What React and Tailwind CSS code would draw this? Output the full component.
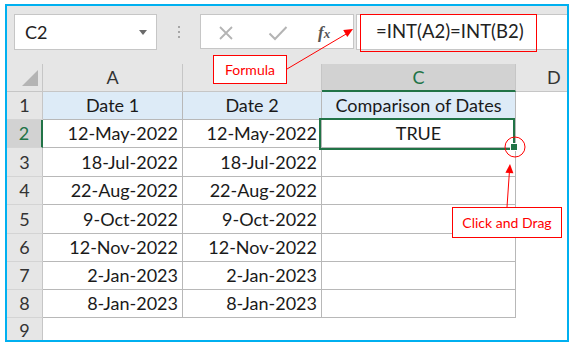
import React from 'react';

const rows = [
    { n: 1, a: 'Date 1', b: 'Date 2', c: 'Comparison of Dates', h: 28, head: true },
    { n: 2, a: '12-May-2022', b: '12-May-2022', c: 'TRUE', h: 28 },
    { n: 3, a: '18-Jul-2022', b: '18-Jul-2022', c: '', h: 29 },
    { n: 4, a: '22-Aug-2022', b: '22-Aug-2022', c: '', h: 28 },
    { n: 5, a: '9-Oct-2022', b: '9-Oct-2022', c: '', h: 29 },
    { n: 6, a: '12-Nov-2022', b: '12-Nov-2022', c: '', h: 28 },
    { n: 7, a: '2-Jan-2023', b: '2-Jan-2023', c: '', h: 28 },
    { n: 8, a: '8-Jan-2023', b: '8-Jan-2023', c: '', h: 28 },
];

const font = 'font-[Lato,sans-serif]';

function RowHeader({ n, active, h }) {
    return (
        <div
            style={{ height: h }}
            className={`w-[36px] shrink-0 flex items-center justify-center border-b border-[#d4d4d4] ${
                active
                    ? 'bg-[#d2d2d2] text-[#217346] border-r-2 border-r-[#217346]'
                    : 'bg-[#e6e6e6] text-[#333] border-r border-r-[#c6c6c6]'
            }`}
        >
            {n}
        </div>
    );
}

function DataRow({ row }) {
    const cell = row.head ? 'bg-[#ddebf7] justify-center' : 'bg-white justify-end pr-[4px]';
    return (
        <div className="flex" style={{ height: row.h }}>
            <RowHeader n={row.n} active={row.n === 2} h={row.h} />
            <div className={`w-[140px] shrink-0 flex items-center border-r border-b border-[#b8b8b8] ${cell}`}>{row.a}</div>
            <div className={`w-[139px] shrink-0 flex items-center border-r border-b border-[#b8b8b8] ${cell}`}>{row.b}</div>
            <div
                className={`w-[194px] shrink-0 flex items-center justify-center border-r border-b border-[#b8b8b8] ${
                    row.head ? 'bg-[#ddebf7]' : 'bg-white'
                }`}
            >
                {row.c}
            </div>
            <div className="flex-1 bg-white" />
        </div>
    );
}

export default function App() {
    return (
        <div className={`relative w-[574px] h-[348px] bg-white text-[18px] text-[#1a1a1a] ${font}`}>
            <div className="absolute left-[5px] top-[4px] w-[564px] h-[338px] border-2 border-[#00b0f0] bg-[#e6e6e6] overflow-hidden flex flex-col">
                {/* toolbar */}
                <div className="h-[58px] shrink-0 flex items-start pt-[8px] pl-[7px]">
                    <div className="w-[143px] h-[36px] bg-white border border-[#c6c6c6] flex items-center justify-between pl-[10px] pr-[9px]">
                        <span className="text-[18px] text-[#222]">C2</span>
                        <span className="w-0 h-0 border-l-[4.5px] border-r-[4.5px] border-t-[5px] border-l-transparent border-r-transparent border-t-[#6a6a6a]" />
                    </div>
                    <div className="w-[43px] h-[36px] flex flex-col items-center justify-center gap-[3px]">
                        <span className="w-[2px] h-[2px] bg-[#a6a6a6]" />
                        <span className="w-[2px] h-[2px] bg-[#a6a6a6]" />
                        <span className="w-[2px] h-[2px] bg-[#a6a6a6]" />
                    </div>
                    <div className="w-[154px] h-[35px] bg-white border border-[#c6c6c6] flex items-center pl-[17px]">
                        <svg width="16" height="16" viewBox="0 0 16 16" className="mt-[2px]">
                            <path d="M2 2 L14 14 M14 2 L2 14" stroke="#b4b4b4" strokeWidth="1.8" fill="none" />
                        </svg>
                        <svg width="20" height="16" viewBox="0 0 20 16" className="ml-[34px] mt-[2px]">
                            <path d="M1.5 8.5 L7 14 L18.5 2" stroke="#b4b4b4" strokeWidth="2" fill="none" />
                        </svg>
                        <span className="ml-[30px] mt-[2px] font-[Liberation_Serif,serif] italic font-bold text-[17px] text-[#555] leading-none">
                            f<span className="text-[13px]">x</span>
                        </span>
                    </div>
                    <div className="ml-[2px] flex-1 h-[36px] bg-white border-y border-l border-[#c6c6c6] flex items-center pl-[19px] text-[18.5px] text-[#222]">
                        =INT(A2)=INT(B2)
                    </div>
                </div>

                {/* column headers */}
                <div className="h-[28px] shrink-0 flex text-[#333]">
                    <div className="w-[36px] shrink-0 border-r border-b border-[#c6c6c6] relative">
                        <svg width="16" height="16" viewBox="0 0 16 16" className="absolute left-[15px] top-[6px]">
                            <polygon points="16,0 16,16 0,16" fill="#b4b4b4" />
                        </svg>
                    </div>
                    <div className="w-[140px] shrink-0 border-r border-b border-[#c6c6c6] flex items-center justify-center">A</div>
                    <div className="w-[139px] shrink-0 border-r border-b border-[#c6c6c6]" />
                    <div className="w-[194px] shrink-0 border-r border-[#c6c6c6] bg-[#d2d2d2] border-b-2 border-b-[#217346] flex items-center justify-center text-[#217346]">
                        C
                    </div>
                    <div className="flex-1 border-b border-[#c6c6c6] flex items-center pl-[31px]">D</div>
                </div>

                {/* rows */}
                {rows.map((r) => (
                    <DataRow key={r.n} row={r} />
                ))}
                <div className="flex flex-1">
                    <div className="w-[36px] shrink-0 bg-[#e6e6e6] border-r border-[#c6c6c6] flex items-start justify-center pt-[3px] leading-none text-[#333]">9</div>
                    <div className="flex-1 bg-white" />
                </div>
            </div>

            {/* formula highlight */}
            <div className="absolute left-[360px] top-[14px] w-[177px] h-[38px] border-[1.5px] border-[#ff0000]" />

            {/* selection C2 */}
            <div className="absolute left-[319px] top-[118px] w-[196px] h-[32px] border-2 border-[#217346]" />
            <div className="absolute left-[510px] top-[143px] w-[8px] h-[8px] bg-[#217346] border border-white" />

            {/* callouts */}
            <div className="absolute left-[213px] top-[55px] w-[74px] h-[29px] bg-white border border-[#ff0000] flex items-center justify-center text-[14px] text-[#ff0000]">
                Formula
            </div>
            <div className="absolute left-[452px] top-[207px] w-[110px] h-[31px] bg-white border border-[#ff0000] flex items-center justify-center text-[14px] text-[#ff0000]">
                Click and Drag
            </div>

            <svg width="574" height="348" className="absolute left-0 top-0 pointer-events-none">
                <line x1="287" y1="69" x2="347" y2="33.5" stroke="#ff0000" strokeWidth="1" />
                <polygon points="353,29 347.3,37 343.2,30.1" fill="#ff0000" />
                <line x1="507" y1="207" x2="509.4" y2="172" stroke="#ff0000" strokeWidth="1" />
                <polygon points="510,164 513.4,173.3 505.4,172.7" fill="#ff0000" />
                <circle cx="515" cy="147" r="10" stroke="#ff0000" strokeWidth="1" fill="none" />
            </svg>
        </div>
    );
}
